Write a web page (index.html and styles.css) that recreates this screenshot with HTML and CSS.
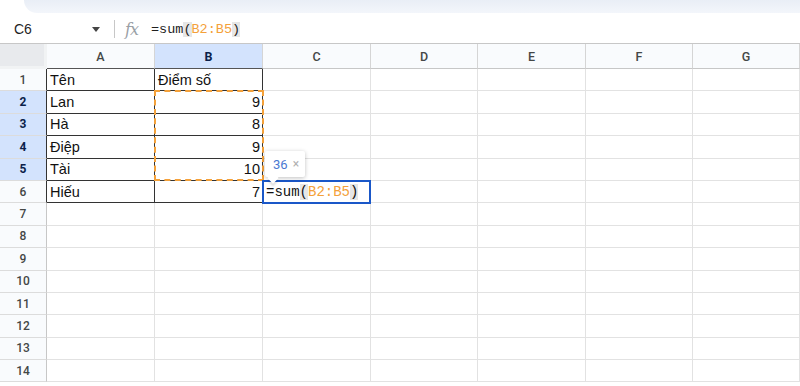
FILE: index.html
```html
<!DOCTYPE html>
<html lang="vi">
<head>
    <meta charset="UTF-8">
    <meta name="viewport" content="width=device-width, initial-scale=1.0">
    <title>Sheet</title>
    <link rel="stylesheet" href="styles.css">
</head>
<body>
    <div class="top-strip"></div>

    <div class="formula-bar">
        <div class="name-box">C6</div>
        <div class="name-arrow"></div>
        <div class="bar-sep"></div>
        <div class="fx">fx</div>
        <div class="formula">=sum<span class="paren">(</span><span class="ref">B2:B5</span><span class="paren">)</span></div>
    </div>

    <div class="sheet">
        <!-- header row -->
        <div class="corner"></div>
        <div class="col-head edge">A</div>
        <div class="col-head sel edge">B</div>
        <div class="col-head">C</div>
        <div class="col-head">D</div>
        <div class="col-head">E</div>
        <div class="col-head">F</div>
        <div class="col-head">G</div>

        <!-- row 1 -->
        <div class="row-head edge">1</div>
        <div class="cell data">Tên</div>
        <div class="cell data">Điểm số</div>
        <div class="cell"></div><div class="cell"></div><div class="cell"></div><div class="cell"></div><div class="cell"></div>

        <!-- row 2 -->
        <div class="row-head sel edge">2</div>
        <div class="cell data">Lan</div>
        <div class="cell data num">9</div>
        <div class="cell"></div><div class="cell"></div><div class="cell"></div><div class="cell"></div><div class="cell"></div>

        <!-- row 3 -->
        <div class="row-head sel edge">3</div>
        <div class="cell data">Hà</div>
        <div class="cell data num">8</div>
        <div class="cell"></div><div class="cell"></div><div class="cell"></div><div class="cell"></div><div class="cell"></div>

        <!-- row 4 -->
        <div class="row-head sel edge">4</div>
        <div class="cell data">Điệp</div>
        <div class="cell data num">9</div>
        <div class="cell"></div><div class="cell"></div><div class="cell"></div><div class="cell"></div><div class="cell"></div>

        <!-- row 5 -->
        <div class="row-head sel edge">5</div>
        <div class="cell data">Tài</div>
        <div class="cell data num">10</div>
        <div class="cell"></div><div class="cell"></div><div class="cell"></div><div class="cell"></div><div class="cell"></div>

        <!-- row 6 -->
        <div class="row-head edge">6</div>
        <div class="cell data">Hiếu</div>
        <div class="cell data num">7</div>
        <div class="cell editing">
            <span class="edit-text">=sum<span class="paren">(</span><span class="ref">B2:B5</span><span class="paren">)</span></span>
            <div class="hint">36 <span class="hint-x">×</span></div>
        </div>
        <div class="cell"></div><div class="cell"></div><div class="cell"></div><div class="cell"></div>

        <div class="row-head">7</div>
        <div class="cell"></div><div class="cell"></div><div class="cell"></div><div class="cell"></div><div class="cell"></div><div class="cell"></div><div class="cell"></div>
        <div class="row-head">8</div>
        <div class="cell"></div><div class="cell"></div><div class="cell"></div><div class="cell"></div><div class="cell"></div><div class="cell"></div><div class="cell"></div>
        <div class="row-head">9</div>
        <div class="cell"></div><div class="cell"></div><div class="cell"></div><div class="cell"></div><div class="cell"></div><div class="cell"></div><div class="cell"></div>
        <div class="row-head">10</div>
        <div class="cell"></div><div class="cell"></div><div class="cell"></div><div class="cell"></div><div class="cell"></div><div class="cell"></div><div class="cell"></div>
        <div class="row-head">11</div>
        <div class="cell"></div><div class="cell"></div><div class="cell"></div><div class="cell"></div><div class="cell"></div><div class="cell"></div><div class="cell"></div>
        <div class="row-head">12</div>
        <div class="cell"></div><div class="cell"></div><div class="cell"></div><div class="cell"></div><div class="cell"></div><div class="cell"></div><div class="cell"></div>
        <div class="row-head">13</div>
        <div class="cell"></div><div class="cell"></div><div class="cell"></div><div class="cell"></div><div class="cell"></div><div class="cell"></div><div class="cell"></div>
        <div class="row-head">14</div>
        <div class="cell"></div><div class="cell"></div><div class="cell"></div><div class="cell"></div><div class="cell"></div><div class="cell"></div><div class="cell"></div>

        <div class="range-mark"></div>
    </div>
</body>
</html>
```

FILE: styles.css
```css
body {
    margin: 0;
    font-family: "Liberation Sans", Arial, sans-serif;
    background: #fff;
    overflow: hidden;
}
.top-strip {
    height: 13px;
    margin-left: 24px;
    background: linear-gradient(#e9eef6, #f3f6fb);
    border-bottom-left-radius: 16px;
}
.formula-bar {
    height: 31px;
    display: flex;
    align-items: center;
    border-bottom: 1px solid #c7c7c7;
    box-sizing: border-box;
    padding-top: 2px;
}
.name-box {
    width: 78px;
    padding-left: 14px;
    font-size: 14px;
    color: #1f1f1f;
}
.name-arrow {
    width: 0;
    height: 0;
    border-left: 4px solid transparent;
    border-right: 4px solid transparent;
    border-top: 5px solid #444;
    margin-right: 14px;
}
.bar-sep {
    width: 1px;
    height: 18px;
    background: #c7c7c7;
    margin-right: 10px;
}
.fx {
    font-family: "DejaVu Serif", "Liberation Serif", serif;
    font-style: italic;
    font-size: 16px;
    color: #9aa0a6;
    width: 26px;
    letter-spacing: -1px;
}
.formula {
    font-family: "Liberation Mono", "DejaVu Sans Mono", monospace;
    font-size: 13.5px;
    color: #1f1f1f;
}
.paren {
    background: #e6e6e6;
}
.ref {
    color: #f4a13a;
}
.sheet {
    position: relative;
    display: grid;
    grid-template-columns: 47px 108px 108px 108px 107px 108px 107px 107px;
    grid-template-rows: 25px repeat(14, 22.4px);
}
.sheet > div {
    box-sizing: border-box;
}
.corner {
    background: #e8eaed;
    border-right: 3px solid #f1f3f4;
    border-bottom: 3px solid #f1f3f4;
}
.col-head {
    background: #f9fbfd;
    border-right: 1px solid #d5d5d5;
    border-bottom: 1px solid #c7c7c7;
    display: flex;
    align-items: center;
    justify-content: center;
    font-family: Roboto, "Liberation Sans", sans-serif;
    font-size: 12.5px;
    font-weight: 500;
    color: #444746;
}
.col-head.sel {
    background: #d3e3fd;
    color: #0b1f4a;
    font-weight: 700;
}
.col-head.edge {
    border-bottom-color: #555;
}
.row-head {
    background: #f9fbfd;
    border-right: 1px solid #c7c7c7;
    border-bottom: 1px solid #dcdcdc;
    display: flex;
    align-items: center;
    justify-content: center;
    font-family: Roboto, "Liberation Sans", sans-serif;
    font-size: 12px;
    font-weight: 500;
    color: #444746;
}
.row-head.edge {
    border-right-color: #333;
}
.row-head.sel {
    background: #d3e3fd;
    color: #0b1f4a;
    font-weight: 700;
}
.cell {
    border-right: 1px solid #e2e2e2;
    border-bottom: 1px solid #e2e2e2;
    font-size: 14.5px;
    color: #111;
    display: flex;
    align-items: center;
    padding: 0 3px;
    white-space: nowrap;
}
.cell.data {
    border-right-color: #333;
    border-bottom-color: #333;
}
.cell.num {
    justify-content: flex-end;
    padding-right: 2px;
}
.cell.editing {
    position: relative;
    border: 2px solid #1a57c8;
    padding-left: 2px;
    margin: -1px 0 -1px -1px;
    z-index: 2;
    background: #fff;
}
.edit-text {
    font-family: "Liberation Mono", "DejaVu Sans Mono", monospace;
    font-size: 14px;
    color: #111;
}
.hint {
    position: absolute;
    left: 1px;
    bottom: 25px;
    width: 40px;
    height: 26px;
    background: #fff;
    box-shadow: 0 1px 4px rgba(0, 0, 0, 0.25);
    border-radius: 2px;
    display: flex;
    align-items: center;
    padding-left: 8px;
    box-sizing: border-box;
    font-family: Roboto, "Liberation Sans", sans-serif;
    font-size: 13px;
    color: #4a78d2;
}
.hint::after {
    content: "";
    position: absolute;
    left: 4px;
    bottom: -5px;
    width: 8px;
    height: 8px;
    background: #fff;
    transform: rotate(45deg);
    box-shadow: 2px 2px 2px rgba(0, 0, 0, 0.12);
}
.hint-x {
    color: #b0b0b0;
    margin-left: 5px;
    font-size: 12px;
}
.range-mark {
    position: absolute;
    grid-column: 3 / 4;
    grid-row: 3 / 7;
    top: -1px;
    left: -1px;
    right: -1px;
    bottom: 0;
    border: 2px dashed #f4a13a;
    z-index: 1;
    pointer-events: none;
}
```
